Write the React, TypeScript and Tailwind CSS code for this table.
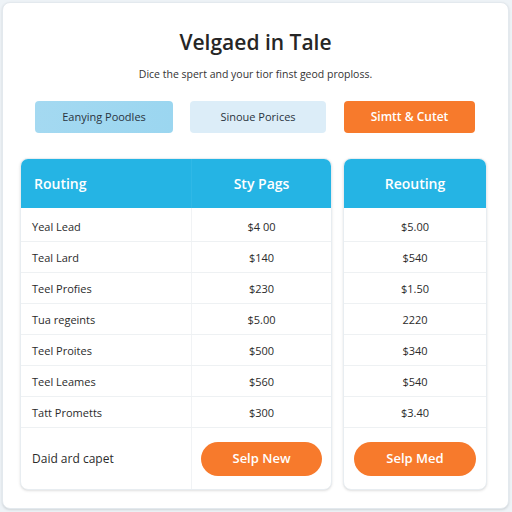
const rows1 = [
  ['Yeal Lead', '$4 00'],
  ['Teal Lard', '$140'],
  ['Teel Profies', '$230'],
  ['Tua regeints', '$5.00'],
  ['Teel Proites', '$500'],
  ['Teel Leames', '$560'],
  ['Tatt Prometts', '$300'],
];

const rows2 = ['$5.00', '$540', '$1.50', '2220', '$340', '$540', '$3.40'];

export default function App() {
  return (
    <div
      className="w-[512px] h-[512px] bg-[#eef3f7] p-[2px] overflow-hidden"
      style={{ fontFamily: '"Open Sans", "Noto Sans", sans-serif' }}
    >
      <div className="h-[507px] w-[507px] rounded-lg bg-white border border-[#e3e9ee] shadow-sm flex flex-col">
        <h1 className="mt-[25px] text-center text-[21px] leading-[28px] font-semibold text-[#262626]">
          Velgaed in Tale
        </h1>
        <p className="mt-[10px] text-center text-[10.5px] leading-[16px] text-[#333]">
          Dice the spert and your tior finst geod proploss.
        </p>

        <div className="mt-[19px] flex pl-[32px] gap-[17px]">
          <div className="w-[138px] h-[32px] rounded-[4px] bg-gradient-to-r from-[#a4d9f1] to-[#9bd6f0] flex items-center justify-center text-[11px] text-[#2a3440]">
            Eanying Poodles
          </div>
          <div className="w-[136px] h-[32px] rounded-[4px] bg-[#dcedf8] flex items-center justify-center text-[11px] text-[#2a3440]">
            Sinoue Porices
          </div>
          <div className="ml-[1px] w-[131px] h-[32px] rounded-[4px] bg-[#f77a2c] flex items-center justify-center text-[12px] font-semibold text-white">
            Simtt &amp; Cutet
          </div>
        </div>

        <div className="mt-[25px] flex pl-[17px] gap-[11px]">
          {/* table 1 */}
          <div className="w-[312px] h-[332px] rounded-lg border border-[#e8edf1] bg-white shadow-sm overflow-hidden flex flex-col">
            <div className="h-[49px] bg-[#25b4e4] flex text-white font-semibold text-[14px]">
              <div className="w-[171px] border-r border-[#2fb8e6] flex items-center pl-[13px]">Routing</div>
              <div className="flex-1 flex items-center justify-center">Sty Pags</div>
            </div>
            {rows1.map(([name, price], i) => (
              <div
                key={i}
                className={`${i === 0 ? 'h-[34px]' : 'h-[31px]'} flex border-b border-[#eef1f3] text-[11px] text-[#2b2b2b]`}
              >
                <div className={`${i === 0 ? 'pt-[6px]' : 'pt-[3px]'} w-[171px] border-r border-[#f1f3f5] flex items-center pl-[11px]`}>
                  {name}
                </div>
                <div className={`${i === 0 ? 'pt-[6px]' : 'pt-[3px]'} flex-1 flex items-center justify-center`}>{price}</div>
              </div>
            ))}
            <div className="flex-1 flex text-[12px] text-[#2b2b2b]">
              <div className="w-[171px] border-r border-[#f1f3f5] flex items-center pl-[11px]">Daid ard capet</div>
              <div className="flex-1 flex items-center justify-center">
                <div className="w-[121px] h-[34px] rounded-full bg-[#f77a2c] text-white font-semibold text-[13px] flex items-center justify-center">
                  Selp New
                </div>
              </div>
            </div>
          </div>

          {/* table 2 */}
          <div className="w-[144px] h-[332px] rounded-lg border border-[#e8edf1] bg-white shadow-sm overflow-hidden flex flex-col">
            <div className="h-[49px] bg-[#25b4e4] flex items-center justify-center text-white font-semibold text-[14px]">
              Reouting
            </div>
            {rows2.map((price, i) => (
              <div
                key={i}
                className={`${i === 0 ? 'h-[34px] pt-[6px]' : 'h-[31px] pt-[3px]'} flex items-center justify-center border-b border-[#eef1f3] text-[11px] text-[#2b2b2b]`}
              >
                {price}
              </div>
            ))}
            <div className="flex-1 flex items-center justify-center">
              <div className="w-[122px] h-[34px] rounded-full bg-[#f77a2c] text-white font-semibold text-[13px] flex items-center justify-center">
                Selp Med
              </div>
            </div>
          </div>
        </div>
      </div>
    </div>
  );
}
